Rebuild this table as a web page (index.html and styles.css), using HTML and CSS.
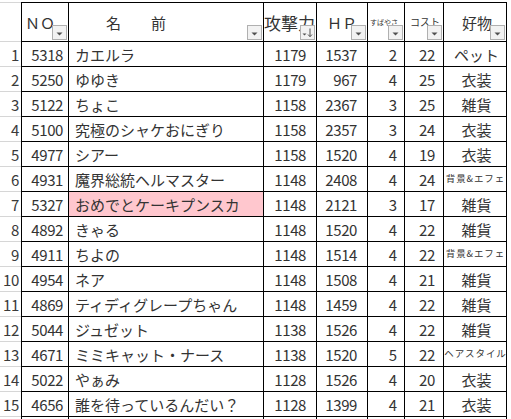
FILE: index.html
```html
<!DOCTYPE html>
<html lang="ja">
<head>
<meta charset="utf-8">
<link rel="stylesheet" href="styles.css">
</head>
<body>
<div class="sheet">
  <div class="row head">
    <div class="gut"></div>
    <div class="cell c-no h-no">ＮＯ<span class="fb"><svg viewBox="0 0 13 13"><path d="M3.5 6.5h6l-3 3z" class="tri"/></svg></span></div>
    <div class="cell c-name h-name">名　　前<span class="fb"><svg viewBox="0 0 13 13"><path d="M3.5 6.5h6l-3 3z" class="tri"/></svg></span></div>
    <div class="cell c-atk h-atk">攻撃力<span class="fb"><svg viewBox="0 0 13 13"><path d="M1.5 7.5h4l-2 2z" class="tri"/><path d="M9 2.5v8M7 8.5l2 2.2 2-2.2" class="arr"/></svg></span></div>
    <div class="cell c-hp h-hp">ＨＰ<span class="fb"><svg viewBox="0 0 13 13"><path d="M3.5 6.5h6l-3 3z" class="tri"/></svg></span></div>
    <div class="cell c-spd h-spd">すばやさ<span class="fb"><svg viewBox="0 0 13 13"><path d="M3.5 6.5h6l-3 3z" class="tri"/></svg></span></div>
    <div class="cell c-cost h-cost">コスト<span class="fb"><svg viewBox="0 0 13 13"><path d="M3.5 6.5h6l-3 3z" class="tri"/></svg></span></div>
    <div class="cell c-fav h-fav">好物<span class="fb"><svg viewBox="0 0 13 13"><path d="M3.5 6.5h6l-3 3z" class="tri"/></svg></span></div>
  </div>

  <div class="row"><div class="gut">1</div><div class="cell c-no">5318</div><div class="cell c-name">カエルラ</div><div class="cell c-atk">1179</div><div class="cell c-hp">1537</div><div class="cell c-spd">2</div><div class="cell c-cost">22</div><div class="cell c-fav">ペット</div></div>
  <div class="row"><div class="gut">2</div><div class="cell c-no">5250</div><div class="cell c-name">ゆゆき</div><div class="cell c-atk">1179</div><div class="cell c-hp">967</div><div class="cell c-spd">4</div><div class="cell c-cost">25</div><div class="cell c-fav">衣装</div></div>
  <div class="row"><div class="gut">3</div><div class="cell c-no">5122</div><div class="cell c-name">ちょこ</div><div class="cell c-atk">1158</div><div class="cell c-hp">2367</div><div class="cell c-spd">3</div><div class="cell c-cost">25</div><div class="cell c-fav">雑貨</div></div>
  <div class="row"><div class="gut">4</div><div class="cell c-no">5100</div><div class="cell c-name">究極のシャケおにぎり</div><div class="cell c-atk">1158</div><div class="cell c-hp">2357</div><div class="cell c-spd">3</div><div class="cell c-cost">24</div><div class="cell c-fav">衣装</div></div>
  <div class="row"><div class="gut">5</div><div class="cell c-no">4977</div><div class="cell c-name">シアー</div><div class="cell c-atk">1158</div><div class="cell c-hp">1520</div><div class="cell c-spd">4</div><div class="cell c-cost">19</div><div class="cell c-fav">衣装</div></div>
  <div class="row"><div class="gut">6</div><div class="cell c-no">4931</div><div class="cell c-name">魔界総統ヘルマスター</div><div class="cell c-atk">1148</div><div class="cell c-hp">2408</div><div class="cell c-spd">4</div><div class="cell c-cost">24</div><div class="cell c-fav small">背景&amp;エフェ</div></div>
  <div class="row"><div class="gut">7</div><div class="cell c-no">5327</div><div class="cell c-name pink">おめでとケーキプンスカ</div><div class="cell c-atk">1148</div><div class="cell c-hp">2121</div><div class="cell c-spd">3</div><div class="cell c-cost">17</div><div class="cell c-fav">雑貨</div></div>
  <div class="row"><div class="gut">8</div><div class="cell c-no">4892</div><div class="cell c-name">きゃる</div><div class="cell c-atk">1148</div><div class="cell c-hp">1520</div><div class="cell c-spd">4</div><div class="cell c-cost">22</div><div class="cell c-fav">雑貨</div></div>
  <div class="row"><div class="gut">9</div><div class="cell c-no">4911</div><div class="cell c-name">ちよの</div><div class="cell c-atk">1148</div><div class="cell c-hp">1514</div><div class="cell c-spd">4</div><div class="cell c-cost">22</div><div class="cell c-fav small">背景&amp;エフェ</div></div>
  <div class="row"><div class="gut">10</div><div class="cell c-no">4954</div><div class="cell c-name">ネア</div><div class="cell c-atk">1148</div><div class="cell c-hp">1508</div><div class="cell c-spd">4</div><div class="cell c-cost">21</div><div class="cell c-fav">雑貨</div></div>
  <div class="row"><div class="gut">11</div><div class="cell c-no">4869</div><div class="cell c-name">ティディグレープちゃん</div><div class="cell c-atk">1148</div><div class="cell c-hp">1459</div><div class="cell c-spd">4</div><div class="cell c-cost">22</div><div class="cell c-fav">雑貨</div></div>
  <div class="row"><div class="gut">12</div><div class="cell c-no">5044</div><div class="cell c-name">ジュゼット</div><div class="cell c-atk">1138</div><div class="cell c-hp">1526</div><div class="cell c-spd">4</div><div class="cell c-cost">22</div><div class="cell c-fav">雑貨</div></div>
  <div class="row"><div class="gut">13</div><div class="cell c-no">4671</div><div class="cell c-name">ミミキャット・ナース</div><div class="cell c-atk">1138</div><div class="cell c-hp">1520</div><div class="cell c-spd">5</div><div class="cell c-cost">22</div><div class="cell c-fav small">ヘアスタイル</div></div>
  <div class="row"><div class="gut">14</div><div class="cell c-no">5022</div><div class="cell c-name">やぁみ</div><div class="cell c-atk">1128</div><div class="cell c-hp">1526</div><div class="cell c-spd">4</div><div class="cell c-cost">20</div><div class="cell c-fav">衣装</div></div>
  <div class="row"><div class="gut">15</div><div class="cell c-no">4656</div><div class="cell c-name">誰を待っているんだい？</div><div class="cell c-atk">1128</div><div class="cell c-hp">1399</div><div class="cell c-spd">4</div><div class="cell c-cost">21</div><div class="cell c-fav">衣装</div></div>
  <div class="row stub"><div class="gut"></div><div class="cell c-no"></div><div class="cell c-name"></div><div class="cell c-atk"></div><div class="cell c-hp"></div><div class="cell c-spd"></div><div class="cell c-cost"></div><div class="cell c-fav"></div></div>
</div>
</body>
</html>
```

FILE: styles.css
```css
* { box-sizing: border-box; }
html, body { margin: 0; padding: 0; background: #fff; }
body {
  width: 511px;
  height: 419px;
  overflow: hidden;
  font-family: "Noto Sans CJK JP", "Noto Sans", sans-serif;
  color: #333;
}
.sheet { padding-top: 2px; }
.row {
  display: grid;
  grid-template-columns: 21px 48px 195px 53px 51px 37px 39px 63px;
  height: 25px;
}
.row.head { height: 40px; }
.row.stub { height: 2px; }
.row.stub .cell, .row.stub .gut { border-bottom: 0; }

.gut {
  border-bottom: 1px solid #d6d6d6;
  display: flex;
  align-items: center;
  justify-content: flex-end;
  padding-right: 2px;
  font-size: 15px;
  line-height: 1;
  color: #3a3a3a;
  letter-spacing: -0.3px;
}
.head .gut { border-top: 1px solid #d6d6d6; }

.cell {
  border-right: 1px solid #000;
  border-bottom: 1px solid #000;
  display: flex;
  align-items: center;
  white-space: nowrap;
  overflow: hidden;
  font-size: 15px;
  line-height: 1;
}
.head .cell { border-top: 1px solid #000; position: relative; }
.c-no { border-left: 1px solid #000; justify-content: flex-end; padding-right: 5px; letter-spacing: -0.4px; }
.c-name { padding-left: 6px; }
.c-atk { justify-content: flex-end; padding-right: 10px; letter-spacing: -0.4px; }
.c-hp { justify-content: flex-end; padding-right: 10px; letter-spacing: -0.4px; }
.c-spd { justify-content: flex-end; padding-right: 7px; }
.c-cost { justify-content: flex-end; padding-right: 8px; letter-spacing: -0.3px; }
.c-fav { justify-content: center; padding-left: 3px; }
.c-fav.small { font-size: 9.5px; letter-spacing: 0.9px; padding-left: 1px; }
.pink { background: #ffc7ce; }

.head .h-no { justify-content: flex-start; padding: 0 0 0 3px; letter-spacing: 0; }
.head .h-name { padding-left: 37px; }
.head .h-atk { justify-content: flex-start; padding: 0; font-size: 17px; letter-spacing: 0; }
.head .h-hp { justify-content: center; padding: 0; letter-spacing: 0; }
.head .h-spd { justify-content: flex-start; padding: 0 0 0 2px; font-size: 7px; }
.head .h-cost { justify-content: flex-start; padding: 0 0 0 5px; font-size: 10px; letter-spacing: 0; }
.head .h-fav { justify-content: center; padding: 0 0 0 4px; }

.fb {
  position: absolute;
  right: 1px;
  bottom: 1px;
  width: 15px;
  height: 15px;
  background: #f2f2f2;
  border: 1px solid #b0b0b0;
  display: flex;
}
.fb svg { width: 13px; height: 13px; display: block; }
.tri { fill: #505050; }
.arr { fill: none; stroke: #505050; stroke-width: 1; }
```
